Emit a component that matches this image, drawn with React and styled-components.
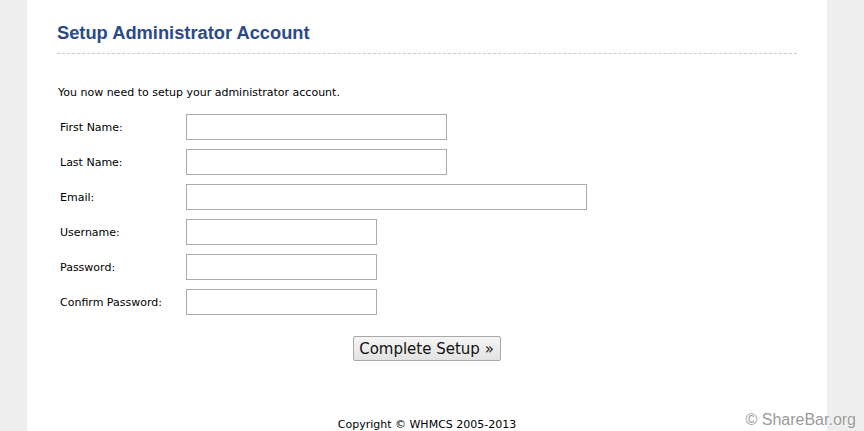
import React from "react";
import styled, { createGlobalStyle } from "styled-components";

const GlobalStyle = createGlobalStyle`
  html, body {
    margin: 0;
    padding: 0;
    background: #eeeeee;
  }
  body {
    font-family: "DejaVu Sans", Tahoma, sans-serif;
    font-size: 11px;
    color: #000;
  }
`;

const Page = styled.div`
  position: relative;
  width: 864px;
  height: 431px;
  overflow: hidden;
  background: #eeeeee;
`;

const Panel = styled.div`
  width: 800px;
  margin-left: 27px;
  min-height: 431px;
  background: #fff;
  box-sizing: border-box;
  padding: 22px 30px 0 30px;
`;

const Title = styled.h1`
  margin: 0;
  padding: 0 0 9px 0;
  font-family: "Liberation Sans", Arial, sans-serif;
  font-size: 18.3px;
  font-weight: bold;
  color: #2a4a8a;
  border-bottom: 1px dashed #cccccc;
`;

const Intro = styled.p`
  margin: 32px 0 15px 1px;
  font-size: 11px;
`;

const FormTable = styled.div`
  display: grid;
  grid-template-columns: 126px auto;
  row-gap: 9px;
  margin-left: 3px;
  align-items: center;
`;

const Label = styled.label`
  font-size: 11px;
`;

const Input = styled.input`
  box-sizing: border-box;
  width: ${(p) => p.$w}px;
  height: 26px;
  border: 1px solid #aaaaaa;
  background: #fff;
  margin: 0;
  padding: 2px 4px;
  font-family: inherit;
`;

const Actions = styled.div`
  display: flex;
  justify-content: center;
  margin-top: 21px;
  padding-right: 1px;
`;

const Button = styled.button`
  width: 148px;
  height: 25px;
  border: 1px solid #a8a8a8;
  border-radius: 2px;
  background: linear-gradient(#f6f6f6, #e2e2e2);
  font-family: "DejaVu Sans", Tahoma, sans-serif;
  font-size: 15px;
  color: #111;
  padding: 0;
`;

const Footer = styled.div`
  margin-top: 57px;
  text-align: center;
  font-size: 11px;
`;

const Watermark = styled.div`
  position: absolute;
  right: 8px;
  bottom: 2px;
  font-family: "Liberation Sans", Arial, sans-serif;
  font-size: 16px;
  color: #9a9a9a;
  text-shadow: 0 0 2px #fff, 0 0 1px #fff;
`;

const fields = [
  { label: "First Name:", w: 261, type: "text" },
  { label: "Last Name:", w: 261, type: "text" },
  { label: "Email:", w: 401, type: "text" },
  { label: "Username:", w: 191, type: "text" },
  { label: "Password:", w: 191, type: "password" },
  { label: "Confirm Password:", w: 191, type: "password" },
];

export default function App() {
  return (
    <Page>
      <GlobalStyle />
      <Panel>
        <Title>Setup Administrator Account</Title>
        <Intro>You now need to setup your administrator account.</Intro>
        <FormTable>
          {fields.map((f) => (
            <React.Fragment key={f.label}>
              <Label>{f.label}</Label>
              <div>
                <Input type={f.type} $w={f.w} />
              </div>
            </React.Fragment>
          ))}
        </FormTable>
        <Actions>
          <Button type="button">Complete Setup »</Button>
        </Actions>
        <Footer>Copyright © WHMCS 2005-2013</Footer>
      </Panel>
      <Watermark>© ShareBar.org</Watermark>
    </Page>
  );
}
